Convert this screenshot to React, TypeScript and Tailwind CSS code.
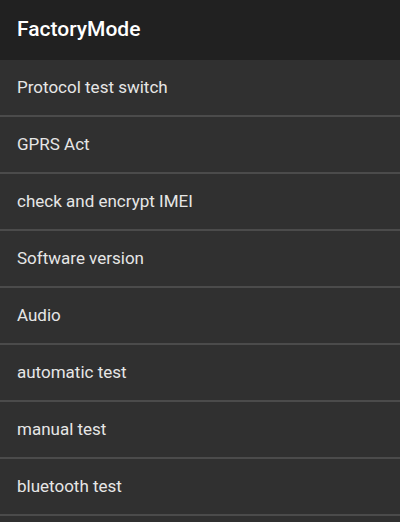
const items = [
  "Protocol test switch",
  "GPRS Act",
  "check and encrypt IMEI",
  "Software version",
  "Audio",
  "automatic test",
  "manual test",
  "bluetooth test",
];

const App = () => {
  return (
    <div className="h-[522px] overflow-hidden bg-[#303030] font-['Roboto',sans-serif]">
      <header className="flex h-[60px] items-center bg-[#212121] px-[17px]">
        <h1 className="text-[21px] font-medium text-white">FactoryMode</h1>
      </header>
      <ul>
        {items.map((item) => (
          <li
            key={item}
            className="flex h-[57px] items-center border-b-2 border-[#4b4b4b] px-[17px] pt-[1px] text-[17px] text-[#e6e6e6]"
          >
            {item}
          </li>
        ))}
      </ul>
    </div>
  );
};

export default App;
